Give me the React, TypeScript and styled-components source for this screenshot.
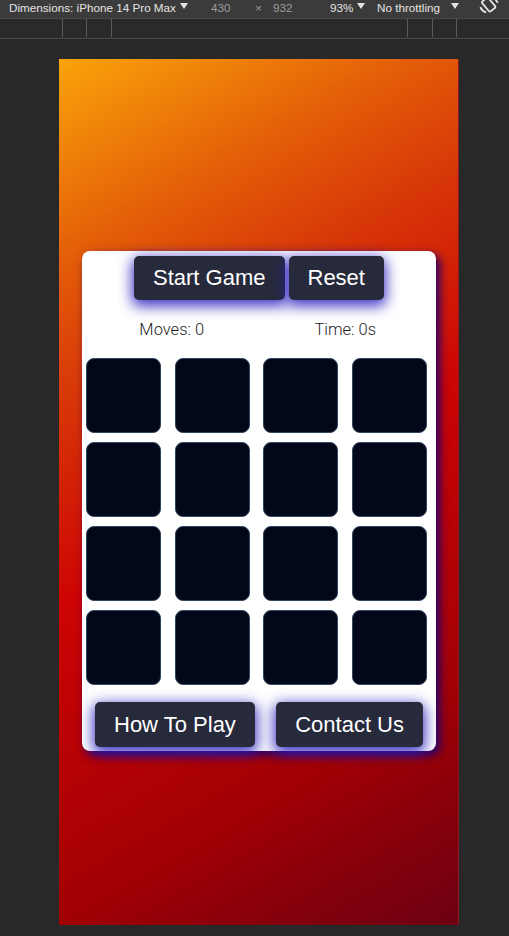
import styled, { createGlobalStyle } from "styled-components";

const GlobalStyle = createGlobalStyle`
  html, body {
    margin: 0;
    padding: 0;
    background: #282828;
  }
  body {
    width: 509px;
    height: 936px;
    overflow: hidden;
  }
`;

const ticksLeft = [62, 86, 111];
const ticksRight = [407, 432, 456];

const App = () => {
  return (
    <>
      <GlobalStyle />
      <Page>
        <Toolbar>
          <ToolText $left={9}>Dimensions: iPhone 14 Pro Max</ToolText>
          <Caret $left={180} />
          <ToolText $left={211} $dim>430</ToolText>
          <ToolText $left={255} $dim>×</ToolText>
          <ToolText $left={273} $dim>932</ToolText>
          <ToolText $left={330}>93%</ToolText>
          <Caret $left={357} />
          <ToolText $left={377}>No throttling</ToolText>
          <Caret $left={451} />
          <RotateIcon width="22" height="20" viewBox="0 0 22 20">
            <g transform="rotate(-40 11 8)" fill="none" stroke="#e8e8e8" strokeWidth="1.7">
              <rect x="7" y="1" width="8" height="13" rx="1.5" />
              <path d="M3 4 A10 10 0 0 0 4 12" />
              <path d="M19 12 A10 10 0 0 0 18 4" />
            </g>
          </RotateIcon>
        </Toolbar>
        <Ruler>
          {ticksLeft.concat(ticksRight).map((x) => (
            <Tick key={x} style={{ left: x }} />
          ))}
        </Ruler>
        <Stage>
          <Device>
            <Card>
              <TopRow>
                <GameButton>Start Game</GameButton>
                <GameButton>Reset</GameButton>
              </TopRow>
              <Stats>
                <Stat>Moves: 0</Stat>
                <Stat>Time: 0s</Stat>
              </Stats>
              <Board>
                {Array.from({ length: 16 }).map((_, i) => (
                  <Tile key={i} />
                ))}
              </Board>
              <BottomRow>
                <GameButton $tall>How To Play</GameButton>
                <GameButton $tall>Contact Us</GameButton>
              </BottomRow>
            </Card>
          </Device>
        </Stage>
      </Page>
    </>
  );
};

const Page = styled.div`
  width: 509px;
  height: 936px;
  background: #282828;
  display: flex;
  flex-direction: column;
`;

const Toolbar = styled.div`
  position: relative;
  height: 18px;
  overflow: hidden;
  background: #3b3b3b;
  border-bottom: 1px solid #4a4a4a;
  font-family: "Liberation Sans", Arial, sans-serif;
  font-size: 11.7px;
`;

const ToolText = styled.span<{ $left: number; $dim?: boolean }>`
  position: absolute;
  top: -1px;
  left: ${({ $left }) => $left}px;
  line-height: 18px;
  color: ${({ $dim }) => ($dim ? "#9b9b9b" : "#e3e3e3")};
  white-space: nowrap;
`;

const Caret = styled.span<{ $left: number }>`
  position: absolute;
  top: 3px;
  left: ${({ $left }) => $left}px;
  width: 0;
  height: 0;
  border-left: 4px solid transparent;
  border-right: 4px solid transparent;
  border-top: 6px solid #e3e3e3;
`;

const RotateIcon = styled.svg`
  position: absolute;
  top: -3px;
  left: 478px;
`;

const Ruler = styled.div`
  position: relative;
  height: 19px;
  background: #292a2c;
  border-bottom: 1px solid #4b4b4b;
`;

const Tick = styled.span`
  position: absolute;
  top: 0;
  width: 1px;
  height: 18px;
  background: #5c5c5c;
`;

const Stage = styled.div`
  flex: 1;
  padding: 20px 0 0 59px;
`;

const Device = styled.div`
  width: 400px;
  height: 866px;
  padding-top: 192px;
  box-sizing: border-box;
  background: linear-gradient(
    150deg,
    #faa30a 0%,
    #e35c08 19%,
    #d83a08 30%,
    #cd0404 50%,
    #a00005 79%,
    #6c0012 100%
  );
  border-right: 1px solid #8a1a22;
  display: flex;
  justify-content: center;
  align-items: flex-start;
`;

const Card = styled.div`
  width: 354px;
  height: 500px;
  box-sizing: border-box;
  margin-left: 1px;
  padding: 5px 0 4px;
  background: #ffffff;
  border-radius: 8px;
  box-shadow: 4px 4px 10px #24006e;
  display: flex;
  flex-direction: column;
  font-family: "Liberation Sans", Arial, sans-serif;
`;

const TopRow = styled.div`
  display: flex;
  justify-content: center;
  gap: 4px;
`;

const GameButton = styled.button<{ $tall?: boolean }>`
  height: ${({ $tall }) => ($tall ? 45 : 44)}px;
  padding: 0 19px;
  border: none;
  border-radius: 5px;
  background: #272a3b;
  color: #ffffff;
  font-family: "Liberation Sans", Arial, sans-serif;
  font-size: 22px;
  box-shadow: 0 4px 14px 2px rgba(40, 30, 190, 0.9);
  cursor: pointer;
`;

const Stats = styled.div`
  display: flex;
  margin-top: 20px;
  padding: 0 4px 0 3px;
  height: 19px;
`;

const Stat = styled.div`
  flex: 1;
  text-align: center;
  font-family: Roboto, "Liberation Sans", sans-serif;
  font-weight: 300;
  font-size: 16.5px;
  line-height: 19px;
  color: #1e1e1e;
`;

const Board = styled.div`
  display: grid;
  grid-template-columns: repeat(4, 75px);
  grid-auto-rows: 75px;
  justify-content: space-between;
  row-gap: 9px;
  margin-top: 19px;
  padding: 0 9px 0 4px;
`;

const Tile = styled.div`
  background: #020819;
  border: 1px solid #33465e;
  border-radius: 8px;
  box-sizing: border-box;
`;

const BottomRow = styled.div`
  display: flex;
  justify-content: space-between;
  margin-top: auto;
  padding: 0 13px;
`;

export default App;
